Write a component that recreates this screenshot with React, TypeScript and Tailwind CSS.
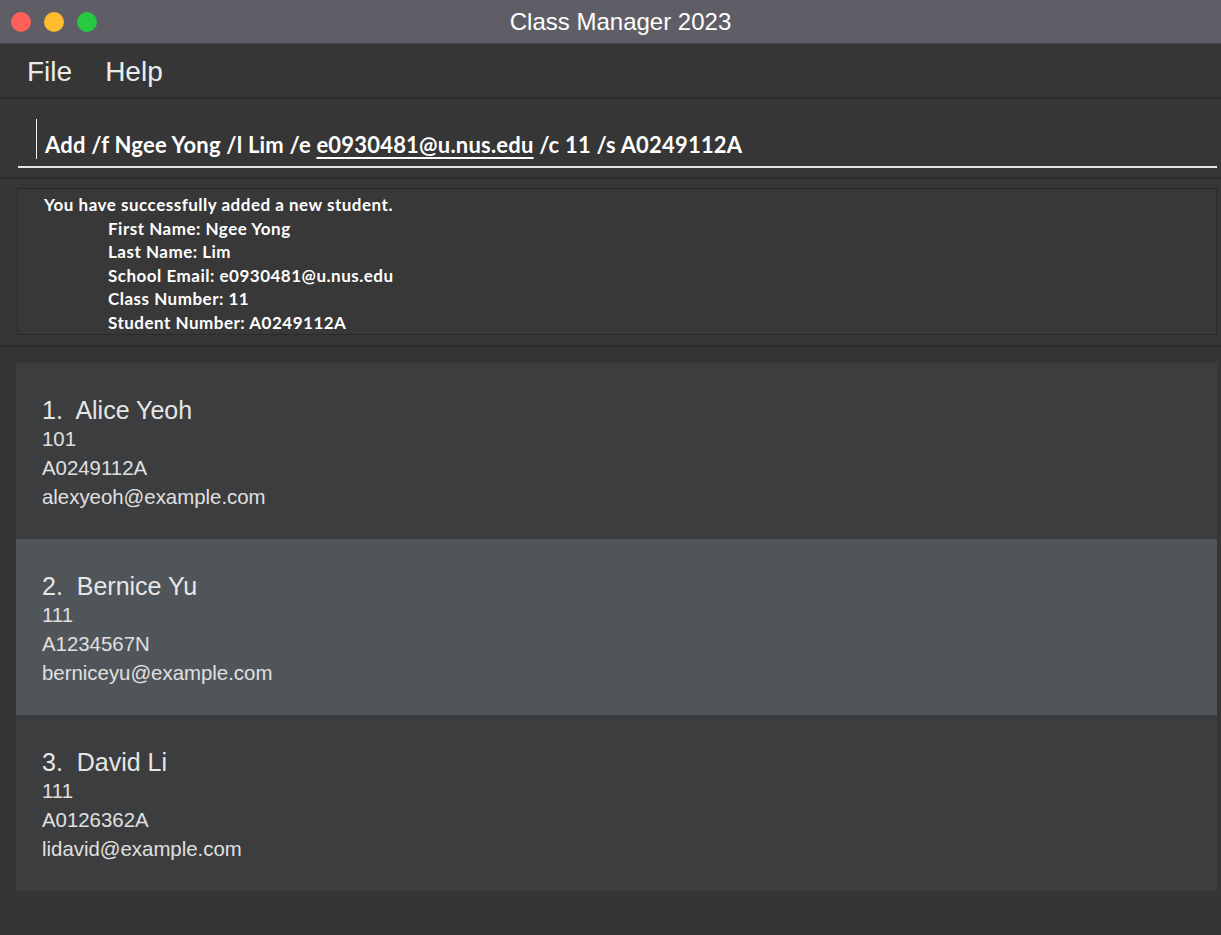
import React from 'react';

const students = [
  { name: 'Alice Yeoh', classNo: '101', studentNo: 'A0249112A', email: 'alexyeoh@example.com' },
  { name: 'Bernice Yu', classNo: '111', studentNo: 'A1234567N', email: 'berniceyu@example.com' },
  { name: 'David Li', classNo: '111', studentNo: 'A0126362A', email: 'lidavid@example.com' },
];

const resultLines = [
  'First Name: Ngee Yong',
  'Last Name: Lim',
  'School Email: e0930481@u.nus.edu',
  'Class Number: 11',
  'Student Number: A0249112A',
];

const StudentCard = ({ index, student, selected }: { index: number; student: typeof students[number]; selected: boolean }) => (
  <div className={`h-[176px] pl-[26px] pt-[32px] ${selected ? 'bg-[#505559]' : 'bg-[#3c3d3f]'}`}>
    <div className="text-[25px] leading-[30px] text-[#e6e6e6]">
      {index}.&nbsp; {student.name}
    </div>
    <div className="text-[20.4px] leading-[29px] text-[#e0e0e0]">{student.classNo}</div>
    <div className="text-[20.4px] leading-[29px] text-[#e0e0e0]">{student.studentNo}</div>
    <div className="text-[20.4px] leading-[29px] text-[#e0e0e0]">{student.email}</div>
  </div>
);

export default function App() {
  return (
    <div className="w-[1221px] h-[935px] bg-[#353535] flex flex-col overflow-hidden font-['Liberation_Sans',Arial,sans-serif]">
      {/* title bar */}
      <div className="h-[44px] shrink-0 bg-[#5f5e66] border-b border-[#4b4a50] grid grid-cols-[1fr_auto_1fr] items-center">
        <div className="flex items-center gap-[13px] pl-[11px]">
          <span className="w-[20px] h-[20px] rounded-full bg-[#fe5f57]" />
          <span className="w-[20px] h-[20px] rounded-full bg-[#febc2e]" />
          <span className="w-[20px] h-[20px] rounded-full bg-[#28c840]" />
        </div>
        <div className="ml-[20px] text-[24px] text-white">Class Manager 2023</div>
        <div />
      </div>

      {/* menu bar */}
      <div className="h-[55px] shrink-0 bg-[#363636] border-b-2 border-[#2b2b2b] flex items-center gap-[33px] pl-[27px] pt-[3px] text-[28px] text-[#ececec]">
        <span>File</span>
        <span>Help</span>
      </div>

      {/* command box */}
      <div className="h-[80px] shrink-0 bg-[#363636] border-b-2 border-[#2b2b2b] pl-[18px] pr-[4px] pt-[20px]">
        <div className="border-b-2 border-[#e4e4e4] h-[49px] flex items-end pb-[8px] relative">
          <span className="absolute left-[18px] top-0 w-[1px] h-[40px] bg-[#f0f0f0]" />
          <div className="pl-[27px] font-['Lato',sans-serif] font-bold text-[22px] tracking-[0.2px] leading-[26px] text-white">
            Add /f Ngee Yong /l Lim /e <span className="underline underline-offset-[4px] decoration-2">e0930481@u.nus.edu</span> /c 11 /s A0249112A
          </div>
        </div>
      </div>

      {/* result display */}
      <div className="h-[168px] shrink-0 bg-[#363636] border-b-2 border-[#2b2b2b] pl-[17px] pr-[4px] pt-[9px]">
        <div className="h-[147px] border border-[#2a2a2a] bg-[#383838] pl-[26px] pt-[4px] font-['Lato',sans-serif] font-bold text-[17px] tracking-[0.5px] leading-[23.5px] text-white">
          <div>You have successfully added a new student.</div>
          {resultLines.map((l) => (
            <div key={l} className="pl-[64px]">{l}</div>
          ))}
        </div>
      </div>

      {/* student list */}
      <div className="flex-1 px-[16px] pt-[16px] pr-[4px]">
        {students.map((s, i) => (
          <StudentCard key={s.name} index={i + 1} student={s} selected={i === 1} />
        ))}
      </div>
    </div>
  );
}
